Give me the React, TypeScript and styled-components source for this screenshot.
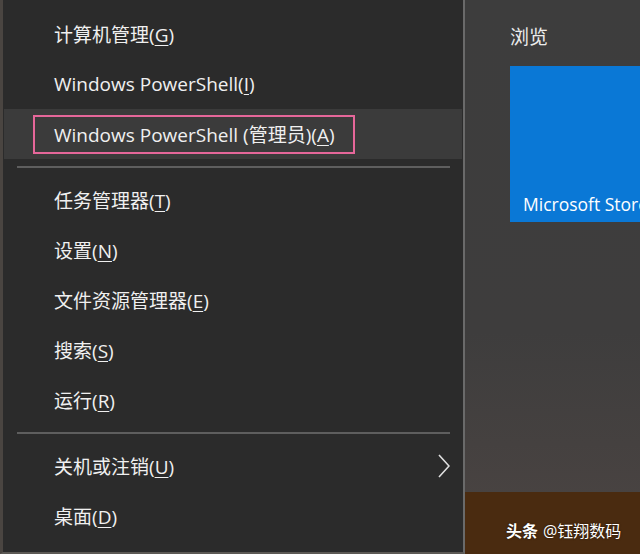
import styled, { createGlobalStyle } from 'styled-components';
import { FC } from 'react';

const GlobalStyle = createGlobalStyle`
  html, body {
    margin: 0;
    padding: 0;
    background: #2b2b2b;
  }
  body {
    font-family: "Open Sans", "Noto Sans CJK SC", sans-serif;
  }
`;

const Screen = styled.div`
  display: flex;
  width: 640px;
  height: 554px;
  overflow: hidden;
`;

const Menu = styled.div`
  width: 460px;
  height: 543px;
  flex-shrink: 0;
  background: #2b2b2b;
  border-left: 3px solid #4a4541;
  border-right: 2px solid #6a6a6a;
  border-bottom: 2px solid #5c5955;
  padding-top: 9px;
  display: flex;
  flex-direction: column;
`;

const Item = styled.div<{ $active?: boolean }>`
  height: 50px;
  display: flex;
  align-items: center;
  padding-left: 50px;
  padding-right: 12px;
  margin-left: 1px;
  margin-right: 1px;
  background: ${(p) => (p.$active ? '#3b3b3b' : 'transparent')};
  color: #f0f0f0;
  font-size: 19px;
  position: relative;
`;

const Label = styled.span`
  flex: 1;
  white-space: nowrap;
`;

const Key = styled.span`
  text-decoration: underline;
  text-underline-offset: 3px;
  text-decoration-thickness: 1px;
`;

const Highlight = styled.div`
  position: absolute;
  left: 29px;
  top: 6px;
  width: 318px;
  height: 35px;
  border: 2.5px solid #e6679a;
`;

const Separator = styled.div`
  height: 16px;
  display: flex;
  align-items: center;
  padding-left: 14px;
  padding-right: 13px;

  &::after {
    content: '';
    flex: 1;
    height: 2px;
    background: #5e5e5e;
  }
`;

const Chevron = styled.svg`
  width: 12px;
  height: 24px;
`;

const Pane = styled.div`
  flex: 1;
  display: flex;
  flex-direction: column;
  background: linear-gradient(180deg, #3d3d3d 0%, #3e3d3d 60%, #4c4543 100%);
`;

const PaneBody = styled.div`
  flex: 1;
  padding: 22px 0 0 45px;
  display: flex;
  flex-direction: column;
`;

const PaneTitle = styled.div`
  color: #ececec;
  font-size: 19px;
  height: 22px;
  margin-bottom: 22px;
`;

const Tile = styled.div`
  width: 140px;
  height: 156px;
  background: #0a78d6;
  display: flex;
  align-items: flex-end;
  padding: 0 0 6px 13px;
  box-sizing: border-box;
  overflow: hidden;
`;

const TileText = styled.span`
  color: #ffffff;
  font-size: 17.5px;
  white-space: nowrap;
`;

const Footer = styled.div`
  height: 62px;
  background: #4a2b10;
  display: flex;
  align-items: center;
  padding-left: 41px;
  padding-top: 14px;
  box-sizing: border-box;
  color: #ffffff;
  font-size: 16px;
  white-space: nowrap;
  text-shadow: 0 0 2px rgba(0, 0, 0, 0.6);
`;

const Strong = styled.b`
  font-weight: 700;
  margin-right: 5px;
`;

type Entry =
  | { kind: 'item'; text: string; key: string; active?: boolean; sub?: boolean }
  | { kind: 'sep' };

const entries: Entry[] = [
  { kind: 'item', text: '计算机管理', key: 'G' },
  { kind: 'item', text: 'Windows PowerShell', key: 'I' },
  { kind: 'item', text: 'Windows PowerShell (管理员)', key: 'A', active: true },
  { kind: 'sep' },
  { kind: 'item', text: '任务管理器', key: 'T' },
  { kind: 'item', text: '设置', key: 'N' },
  { kind: 'item', text: '文件资源管理器', key: 'E' },
  { kind: 'item', text: '搜索', key: 'S' },
  { kind: 'item', text: '运行', key: 'R' },
  { kind: 'sep' },
  { kind: 'item', text: '关机或注销', key: 'U', sub: true },
  { kind: 'item', text: '桌面', key: 'D' },
];

const App: FC = () => {
  return (
    <>
      <GlobalStyle />
      <Screen>
        <Menu>
          {entries.map((e, i) =>
            e.kind === 'sep' ? (
              <Separator key={i} />
            ) : (
              <Item key={i} $active={e.active}>
                {e.active && <Highlight />}
                <Label>
                  {e.text}(<Key>{e.key}</Key>)
                </Label>
                {e.sub && (
                  <Chevron viewBox="0 0 12 24">
                    <polyline points="1,1 11,12 1,23" fill="none" stroke="#e0e0e0" strokeWidth="1.6" />
                  </Chevron>
                )}
              </Item>
            )
          )}
        </Menu>
        <Pane>
          <PaneBody>
            <PaneTitle>浏览</PaneTitle>
            <Tile>
              <TileText>Microsoft Store</TileText>
            </Tile>
          </PaneBody>
          <Footer>
            <Strong>头条</Strong>@钰翔数码
          </Footer>
        </Pane>
      </Screen>
    </>
  );
};

export default App;
